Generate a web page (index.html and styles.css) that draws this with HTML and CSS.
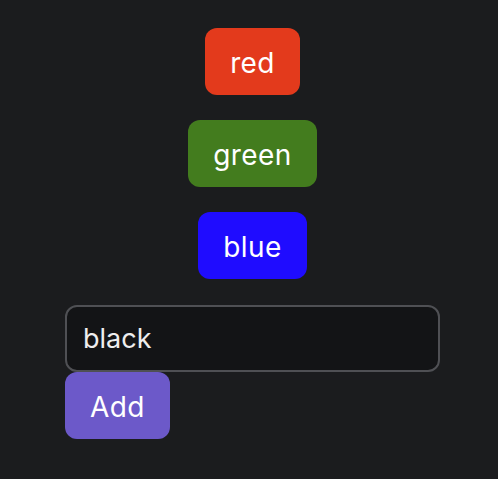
FILE: index.html
```html
<!DOCTYPE html>
<html lang="en">
<head>
    <meta charset="UTF-8">
    <title>Colors</title>
    <link rel="stylesheet" href="styles.css">
</head>
<body>
    <div class="container">
        <button class="color-btn red">red</button>
        <button class="color-btn green">green</button>
        <button class="color-btn blue">blue</button>
        <div class="add-form">
            <input type="text" id="color-name" value="black">
            <button id="add-color">Add</button>
        </div>
    </div>
</body>
</html>
```

FILE: styles.css
```css
body {
    font-family: 'Inter', sans-serif;
    color: #FFF;
    background-color: #1B1C1E;
    margin: 0;
    padding: 28px 0 0 7px;
}
.container {
    display: flex;
    flex-direction: column;
    align-items: center;
    gap: 25px;
}
button {
    font-family: inherit;
    font-size: 28px;
    letter-spacing: 0.4px;
    color: #FFF;
    border: none;
    border-radius: 12px;
    height: 67px;
    padding: 2px 25px 0;
    cursor: pointer;
}
.red {
    background-color: #E33A1C;
}
.green {
    background-color: #437C1E;
}
.blue {
    background-color: #1F0CFF;
}
.add-form {
    width: 375px;
    margin-top: 1px;
    display: flex;
    flex-direction: column;
    align-items: flex-start;
}
input {
    width: 100%;
    height: 67px;
    box-sizing: border-box;
    background-color: #131416;
    border: 2px solid #4F5054;
    border-radius: 12px;
    color: #EEE;
    font-family: inherit;
    font-size: 27px;
    padding: 0 16px;
}
#add-color {
    background-color: #6C59C9;
}
```
